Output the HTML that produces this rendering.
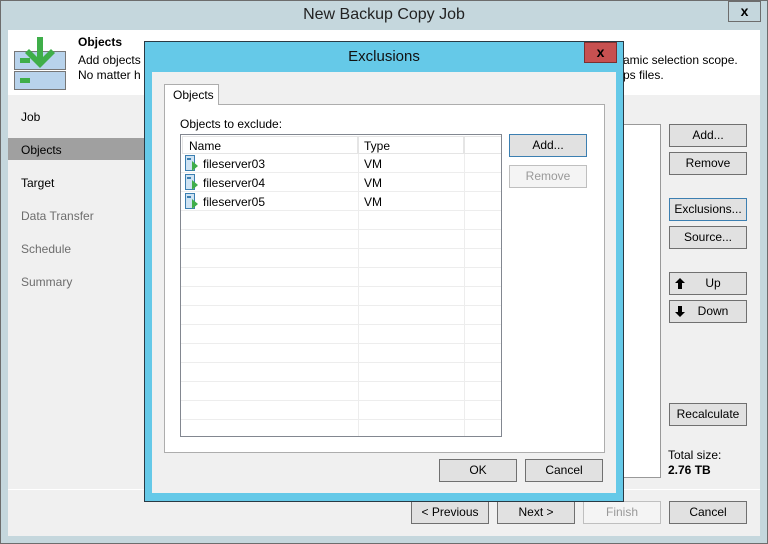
<!DOCTYPE html>
<html><head><style>
*{box-sizing:border-box;margin:0;padding:0}
body{width:768px;height:544px;position:relative;overflow:hidden;font-family:"Liberation Sans",sans-serif;font-size:12px;color:#000;background:#c5d7dd}
.a{position:absolute}
.btn{position:absolute;background:#e1e1e1;border:1px solid #707070;text-align:center;line-height:20px;font-size:12px}
.dis{color:#999;border-color:#bfbfbf;background:#f4f4f4}
.foc{border-color:#3c7fb1}
.nav{position:absolute;left:21px;font-size:12px}
.row{position:absolute;left:0;width:320px;height:19px;border-bottom:1px solid #ededed}
</style></head><body>
<div class="a" style="left:0;top:0;width:768px;height:544px;border:1px solid #6d6d6d"></div>
<div class="a" style="left:0;top:6px;width:768px;text-align:center;font-size:16px;color:#222">New Backup Copy Job</div>
<div class="a" style="left:728px;top:1px;width:33px;height:21px;border:1px solid #6d6d6d;text-align:center;font-weight:bold;font-size:14px;line-height:18px">x</div>
<div class="a" style="left:8px;top:30px;width:752px;height:506px;background:#f0f0f0"></div>
<div class="a" style="left:8px;top:30px;width:752px;height:65px;background:#fff"></div>
<svg class="a" style="left:14px;top:36px" width="54" height="54">
<rect x="0.5" y="15.5" width="51" height="18" fill="#b8d3ec" stroke="#777"/>
<rect x="0.5" y="35.5" width="51" height="18" fill="#b8d3ec" stroke="#777"/>
<rect x="6" y="22" width="10" height="5" fill="#3fae49"/><rect x="6" y="42" width="10" height="5" fill="#3fae49"/>
<path d="M23 1h6v20l8-8 4 4-15 15-15-15 4-4 8 8z" fill="#3fae49"/>
</svg>
<div class="a" style="left:78px;top:35px;font-weight:bold">Objects</div>
<div class="a" style="left:78px;top:53px">Add objects</div>
<div class="a" style="left:78px;top:68px">No matter h</div>
<div class="a" style="left:623px;top:53px">amic selection scope.</div>
<div class="a" style="left:623px;top:68px">ps files.</div>
<div class="nav" style="top:110px">Job</div>
<div class="a" style="left:8px;top:138px;width:137px;height:22px;background:#a0a0a0"></div>
<div class="nav" style="top:143px">Objects</div>
<div class="nav" style="top:176px">Target</div>
<div class="nav" style="top:209px;color:#6d6d6d">Data Transfer</div>
<div class="nav" style="top:242px;color:#6d6d6d">Schedule</div>
<div class="nav" style="top:275px;color:#6d6d6d">Summary</div>
<div class="a" style="left:600px;top:124px;width:61px;height:354px;background:#fff;border:1px solid #999"></div>
<div class="btn" style="left:669px;top:124px;width:78px;height:23px">Add...</div>
<div class="btn" style="left:669px;top:152px;width:78px;height:23px">Remove</div>
<div class="btn foc" style="left:669px;top:198px;width:78px;height:23px">Exclusions...</div>
<div class="btn" style="left:669px;top:226px;width:78px;height:23px">Source...</div>
<div class="btn" style="left:669px;top:272px;width:78px;height:23px">&nbsp;&nbsp;&nbsp;Up<svg class="a" style="left:5px;top:5px" width="10" height="11"><path d="M5 0l5 5H7v6H3V5H0z"/></svg></div>
<div class="btn" style="left:669px;top:300px;width:78px;height:23px">&nbsp;&nbsp;&nbsp;Down<svg class="a" style="left:5px;top:5px" width="10" height="11"><path d="M5 11l5-5H7V0H3v6H0z"/></svg></div>
<div class="btn" style="left:669px;top:403px;width:78px;height:23px">Recalculate</div>
<div class="a" style="left:668px;top:448px">Total size:</div>
<div class="a" style="left:668px;top:463px;font-weight:bold">2.76 TB</div>
<div class="a" style="left:8px;top:489px;width:752px;height:1px;background:#fff"></div>
<div class="btn" style="left:411px;top:501px;width:78px;height:23px">&lt; Previous</div>
<div class="btn" style="left:497px;top:501px;width:78px;height:23px">Next &gt;</div>
<div class="btn dis" style="left:583px;top:501px;width:78px;height:23px">Finish</div>
<div class="btn" style="left:669px;top:501px;width:78px;height:23px">Cancel</div>

<div class="a" style="left:144px;top:41px;width:480px;height:461px;background:#65c9e8;border:1px solid #2a3a44"></div>
<div class="a" style="left:144px;top:48px;width:480px;text-align:center;font-size:15px;color:#111">Exclusions</div>
<div class="a" style="left:584px;top:42px;width:33px;height:21px;background:#c75050;border:1px solid #7a3030;text-align:center;font-weight:bold;font-size:14px;line-height:18px">x</div>
<div class="a" style="left:152px;top:72px;width:464px;height:421px;background:#f0f0f0"></div>
<div class="a" style="left:164px;top:104px;width:441px;height:349px;background:#fff;border:1px solid #adadad"></div>
<div class="a" style="left:164px;top:84px;width:55px;height:21px;background:#fff;border:1px solid #adadad;border-bottom:none;padding:3px 0 0 8px">Objects</div>
<div class="a" style="left:180px;top:117px">Objects to exclude:</div>
<div class="a" style="left:180px;top:134px;width:322px;height:303px;background:#fff;border:1px solid #828790;overflow:hidden">
 <div class="a" style="left:1px;top:1px;width:176px;height:18px;border:1px solid #e5e5e5;padding:2px 6px">Name</div>
 <div class="a" style="left:177px;top:1px;width:106px;height:18px;border:1px solid #e5e5e5;padding:2px 5px">Type</div>
 <div class="a" style="left:283px;top:1px;width:40px;height:18px;border:1px solid #e5e5e5"></div>
 <div class="a" style="left:177px;top:19px;width:1px;height:290px;background:#ededed"></div>
 <div class="a" style="left:283px;top:19px;width:1px;height:290px;background:#ededed"></div>
 <div class="row" style="top:19px"></div><div class="row" style="top:38px"></div><div class="row" style="top:57px"></div><div class="row" style="top:76px"></div><div class="row" style="top:95px"></div><div class="row" style="top:114px"></div><div class="row" style="top:133px"></div><div class="row" style="top:152px"></div><div class="row" style="top:171px"></div><div class="row" style="top:190px"></div><div class="row" style="top:209px"></div><div class="row" style="top:228px"></div><div class="row" style="top:247px"></div><div class="row" style="top:266px"></div>
</div>
<svg class="a" style="left:185px;top:155px" width="16" height="60">
 <g id="i"><rect x="0.5" y="0.5" width="9" height="15" fill="#cfe3f3" stroke="#3c7fb1"/><rect x="2" y="3" width="4" height="2" fill="#3c7fb1"/><path d="M7 6l6 5-6 5z" fill="#3fae49"/></g>
 <use href="#i" y="19"/><use href="#i" y="38"/>
</svg>
<div class="a" style="left:203px;top:157px">fileserver03</div><div class="a" style="left:364px;top:157px">VM</div>
<div class="a" style="left:203px;top:176px">fileserver04</div><div class="a" style="left:364px;top:176px">VM</div>
<div class="a" style="left:203px;top:195px">fileserver05</div><div class="a" style="left:364px;top:195px">VM</div>
<div class="btn foc" style="left:509px;top:134px;width:78px;height:23px">Add...</div>
<div class="btn dis" style="left:509px;top:165px;width:78px;height:23px">Remove</div>
<div class="btn" style="left:439px;top:459px;width:78px;height:23px">OK</div>
<div class="btn" style="left:525px;top:459px;width:78px;height:23px">Cancel</div>
</body></html>
